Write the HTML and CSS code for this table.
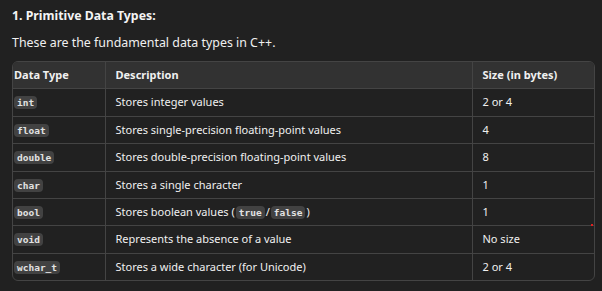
FILE: index.html
```html
<!DOCTYPE html>
<html>
<head>
<meta charset="utf-8">
<link rel="stylesheet" href="styles.css">
</head>
<body>
<div class="content">
  <h3 class="heading">1. Primitive Data Types:</h3>
  <p class="intro">These are the fundamental data types in C++.</p>
  <div class="table-wrap">
    <table class="types">
      <colgroup>
        <col class="c1"><col class="c2"><col class="c3">
      </colgroup>
      <thead>
        <tr><th>Data Type</th><th>Description</th><th>Size (in bytes)</th></tr>
      </thead>
      <tbody>
        <tr><td><code>int</code></td><td>Stores integer values</td><td>2 or 4</td></tr>
        <tr><td><code>float</code></td><td>Stores single-precision floating-point values</td><td>4</td></tr>
        <tr><td><code>double</code></td><td>Stores double-precision floating-point values</td><td>8</td></tr>
        <tr><td><code>char</code></td><td>Stores a single character</td><td>1</td></tr>
        <tr><td><code>bool</code></td><td>Stores boolean values (<code class="inl">true</code>/<code class="inl">false</code>)</td><td>1</td></tr>
        <tr><td><code>void</code></td><td>Represents the absence of a value</td><td>No size</td></tr>
        <tr><td><code>wchar_t</code></td><td>Stores a wide character (for Unicode)</td><td>2 or 4</td></tr>
      </tbody>
    </table>
    <span class="dot"></span>
  </div>
</div>
</body>
</html>
```
FILE: styles.css
```css
html, body {
  margin: 0;
  padding: 0;
  background: #212121;
}
body {
  font-family: "Noto Sans", "Open Sans", sans-serif;
  color: #ececec;
  font-size: 13px;
}
.content {
  padding: 6px 7px 0 12px;
}
.heading {
  margin: 0;
  font-size: 12.3px;
  font-weight: 700;
  line-height: 20px;
  color: #f4f4f4;
}
.intro {
  margin: 7px 0 0 0;
  line-height: 20px;
  font-size: 12.4px;
  color: #f0f0f0;
}
.table-wrap {
  position: relative;
  margin-top: 8px;
  width: 583px;
  border: 1px solid #444444;
  border-radius: 6px;
  overflow: hidden;
  box-sizing: border-box;
}
.types {
  width: 100%;
  border-collapse: collapse;
  table-layout: fixed;
}
.c1 { width: 92px; }
.c2 { width: 367px; }
.c3 { width: auto; }
.types th, .types td {
  text-align: left;
  padding: 5px 10px;
  line-height: 16.4px;
  font-size: 11px;
  border-bottom: 1px solid #444444;
  border-right: 1px solid #444444;
  white-space: nowrap;
  color: #f0f0f0;
}
.types th {
  background: #323232;
  font-weight: 700;
  height: 16px;
}
.types th:first-child, .types td:first-child {
  padding-left: 1px;
}
.types th:last-child, .types td:last-child {
  border-right: none;
}
.types tbody tr:last-child td {
  border-bottom: none;
}
code {
  font-family: "DejaVu Sans Mono", "Liberation Mono", monospace;
  font-size: 9.5px;
  background: #424242;
  color: #e2e2e2;
  border-radius: 4px;
  padding: 1px 3px;
  line-height: 11px;
  display: inline-block;
  font-weight: 700;
}
code.inl {
  margin: 0 1px;
}
.dot {
  position: absolute;
  right: 1px;
  top: 162px;
  width: 2px;
  height: 2px;
  background: #e02020;
}
```
